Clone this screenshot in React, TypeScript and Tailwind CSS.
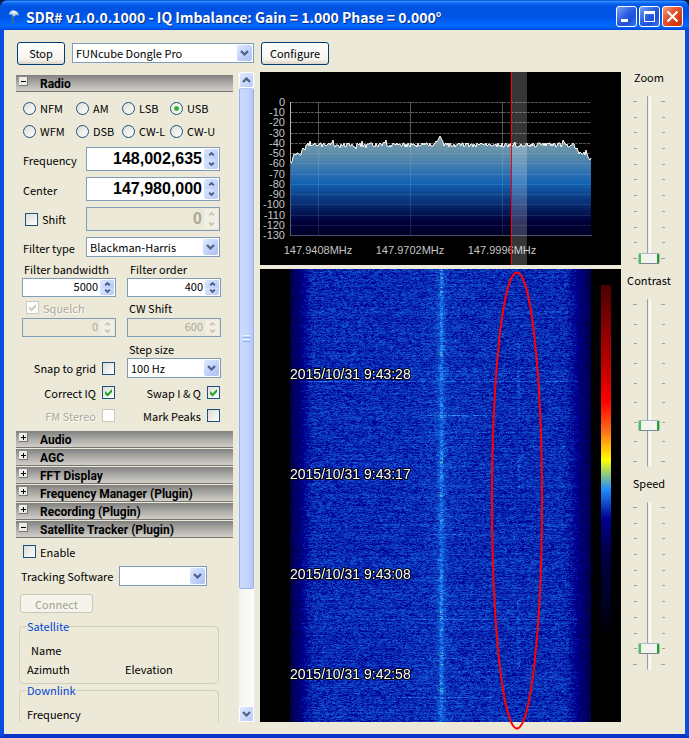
import { useLayoutEffect, useRef, type ReactNode } from 'react';

function createRandom(seed: number) {
  let state = seed;
  return () => {
    state = (state + 0x6d2b79f5) | 0;
    let t = Math.imul(state ^ (state >>> 15), 1 | state);
    t = (t + Math.imul(t ^ (t >>> 7), 61 | t)) ^ t;
    return ((t ^ (t >>> 14)) >>> 0) / 4294967296;
  };
}

/* ---------- Window chrome ---------- */

function TitleBar() {
  const button =
    'flex h-[21px] w-[21px] items-center justify-center rounded-[3px] border border-white';
  const blue = 'bg-[linear-gradient(135deg,#7ea2f5,#2a5fe0_45%,#1d4fd8_70%,#3c7bf5)]';
  return (
    <header className="flex h-[30px] shrink-0 items-center bg-[linear-gradient(180deg,#0048d0,#2b8bff_5%,#0a62f0_12%,#0053e1_25%,#0054e5_55%,#0066ff_80%,#0066ff_90%,#0045d5)] pt-[3px] pr-[6px] pl-[7px]">
      <svg viewBox="0 0 14 16" className="h-4 w-[14px]" aria-hidden="true">
        <path d="M4.500 7h2.400v7.500H4.500z" fill="#3f6a9c" />
        <path d="M2 5.500C2 2.500 4.500 .8 7 1.200c3 .5 4.800 2.400 4.800 5.300L9 5.800 7 7.800 4.500 5.500Z" fill="#b4cbe0" />
        <path d="M3.500 3C5.500 1.300 8.500 1.700 10 3.700L6.500 4.500Z" fill="#eef5fb" />
      </svg>
      <h1 className="ml-[5px] flex-1 truncate font-['Noto_Sans_CJK_JP','Noto_Sans',sans-serif] text-sm leading-5 font-bold text-white [text-shadow:1px_1px_0_#0a2a80]">
        SDR# v1.0.0.1000 - IQ Imbalance: Gain = 1.000 Phase = 0.000°
      </h1>
      <div className="flex gap-[2px]">
        <button aria-label="Minimize" className={`${button} ${blue}`}>
          <svg viewBox="0 0 19 19" className="h-[19px] w-[19px]"><path d="M4 12h7v3H4z" fill="#fff" /></svg>
        </button>
        <button aria-label="Maximize" className={`${button} ${blue}`}>
          <svg viewBox="0 0 19 19" className="h-[19px] w-[19px]">
            <path d="M4 4h11v11H4zM5 7v7h9V7z" fill="#fff" fillRule="evenodd" />
          </svg>
        </button>
        <button aria-label="Close" className={`${button} bg-[linear-gradient(135deg,#f0a088,#e25330_40%,#d63a12_75%,#c8380f)]`}>
          <svg viewBox="0 0 19 19" className="h-[19px] w-[19px]">
            <path d="M4.500 4.500l10 10M14.500 4.500l-10 10" stroke="#fff" strokeWidth="2.200" />
          </svg>
        </button>
      </div>
    </header>
  );
}

/* ---------- Form controls ---------- */

function Chevron({ up = false, small = false, color = '#4d6185' }: { up?: boolean; small?: boolean; color?: string }) {
  return (
    <svg viewBox="0 0 9 6" className={small ? 'h-1 w-[7px]' : 'h-[6px] w-[9px]'} aria-hidden="true">
      <path d={up ? 'M1 5L4.500 1.500 8 5' : 'M1 1L4.500 4.500 8 1'} fill="none" stroke={color} strokeWidth={small ? 2.800 : 2.200} />
    </svg>
  );
}

function PushButton({ children, className, disabled }: { children: ReactNode; className: string; disabled?: boolean }) {
  return (
    <button
      disabled={disabled}
      className={`rounded-[3px] border border-[#003c74] bg-[linear-gradient(180deg,#fff,#f4f3ee_80%,#d8d2c4)] disabled:border-[#c9c7ba] disabled:bg-none disabled:bg-[#f5f4ea] disabled:text-[#a1a192] ${className}`}
    >
      {children}
    </button>
  );
}

function Select({ id, label, options, className }: { id: string; label?: string; options: string[]; className: string }) {
  return (
    <div className={`relative h-[20px] ${className}`}>
      <select
        id={id}
        aria-label={label}
        className="block h-full w-full appearance-none border border-[#7f9db9] bg-white pr-5 pl-[3px] leading-[18px]"
      >
        {options.map((o) => (
          <option key={o}>{o}</option>
        ))}
      </select>
      <span className="pointer-events-none absolute inset-y-[2px] right-[2px] flex w-[15px] items-center justify-center rounded-[2px] bg-[linear-gradient(135deg,#e1eafe,#c3d3fd_50%,#aebff0)]">
        <Chevron />
      </span>
    </div>
  );
}

function Spinner({ id, label, value, large, disabled }: { id: string; label?: string; value: string; large?: boolean; disabled?: boolean }) {
  const step = disabled
    ? 'flex flex-1 items-center justify-center bg-[#f1efe4]'
    : 'flex flex-1 items-center justify-center bg-[linear-gradient(135deg,#dbe6fe,#b8c9f8)]';
  const arrow = disabled ? '#c9c7ba' : '#4d6185';
  return (
    <div className={`flex w-full border border-[#7f9db9] ${large ? 'h-[24px]' : 'h-[19px]'} ${disabled ? 'bg-[#ebe8d7]' : 'bg-white'}`}>
      <input
        id={id}
        aria-label={label}
        defaultValue={value}
        disabled={disabled}
        className={`h-full min-w-0 flex-1 bg-transparent pr-[2px] text-right disabled:text-[#aca899] ${
          large ? "pb-[1px] font-['Liberation_Sans',Arial,sans-serif] text-base font-bold" : 'pb-[3px] text-[11px]'
        }`}
      />
      <div className="my-[1px] mr-[1px] flex w-[14px] flex-col overflow-hidden rounded-[2px]">
        <button aria-label={`Increase ${id}`} disabled={disabled} className={step}><Chevron up small color={arrow} /></button>
        <button aria-label={`Decrease ${id}`} disabled={disabled} className={step}><Chevron small color={arrow} /></button>
      </div>
    </div>
  );
}

function Radio({ label, checked }: { label: string; checked?: boolean }) {
  return (
    <label className="flex items-center gap-1">
      <input
        type="radio"
        name="mode"
        defaultChecked={checked}
        className="h-[13px] w-[13px] shrink-0 appearance-none rounded-full border border-[#215280] bg-[linear-gradient(135deg,#dcdcd7,#fff)] checked:bg-[radial-gradient(circle,#21a121_0,#3cc43c_2px,#f4f4f0_3px)]"
      />
      <span className="whitespace-nowrap">{label}</span>
    </label>
  );
}

function Check({ label, checked, disabled, trailing, className = '' }: { label: string; checked?: boolean; disabled?: boolean; trailing?: boolean; className?: string }) {
  return (
    <label
      className={`flex h-[13px] items-center ${trailing ? 'flex-row-reverse gap-[6px]' : 'gap-1'} ${
        disabled ? 'text-[#aca899] [text-shadow:1px_1px_0_#fff]' : ''
      } ${className}`}
    >
      <span className="relative h-[13px] w-[13px] shrink-0">
        <input
          type="checkbox"
          defaultChecked={checked}
          disabled={disabled}
          className="peer block h-[13px] w-[13px] appearance-none border border-[#1c5180] bg-[linear-gradient(135deg,#dcdcd7,#fff)] disabled:border-[#cac8bb] disabled:bg-none disabled:bg-white"
        />
        <svg viewBox="0 0 13 13" className="pointer-events-none absolute inset-0 hidden text-[#21a121] peer-checked:block peer-disabled:text-[#cac8bb]">
          <path d="M3 5v3l2.500 2.500L10 6V3L5.500 7.500Z" fill="currentColor" />
        </svg>
      </span>
      <span className="whitespace-nowrap">{label}</span>
    </label>
  );
}

function SectionHeader({ title, open }: { title: string; open?: boolean }) {
  return (
    <h2 className="mb-[1px] h-[17px] border-b border-[#77756f] bg-[linear-gradient(180deg,#808080,#a3a29f_40%,#d2cfc8)]">
      <button aria-expanded={!!open} className="flex h-4 w-full items-center text-left font-[Roboto,Arial,sans-serif] text-xs leading-4 font-bold">
        <svg viewBox="0 0 9 9" className="mb-[3px] ml-[3px] h-[9px] w-[9px]" aria-hidden="true">
          <path d="M0 0h9v9H0z" fill="#777" />
          <path d="M0 0h8v8H0z" fill="#eceae4" />
          <path d={open ? 'M2 4h5v1H2z' : 'M2 4h5v1H2zM4 2h1v5H4z'} fill="#000" />
        </svg>
        <span className="mt-[2px] ml-3">{title}</span>
      </button>
    </h2>
  );
}

/* ---------- Side panel ---------- */

function RadioSection() {
  return (
    <div className="pt-[7px] pr-[12px] pl-[6px]">
      <div className="grid grid-cols-[53px_46px_48px_1fr] gap-y-[7px] pl-[1px] leading-4">
        <Radio label="NFM" />
        <Radio label="AM" />
        <Radio label="LSB" />
        <Radio label="USB" checked />
        <Radio label="WFM" />
        <Radio label="DSB" />
        <Radio label="CW-L" />
        <Radio label="CW-U" />
      </div>

      <div className="mt-2 grid grid-cols-[61px_134px] items-center gap-x-[2px] gap-y-[6px] pl-[1px]">
        <label htmlFor="frequency" className="pt-[2px]">Frequency</label>
        <Spinner id="frequency" value="148,002,635" large />
        <label htmlFor="center" className="pt-[2px]">Center</label>
        <Spinner id="center" value="147,980,000" large />
        <Check label="Shift" className="pl-[2px]" />
        <Spinner id="shift" label="Shift" value="0" large disabled />
        <label htmlFor="filter-type" className="pt-[2px]">Filter type</label>
        <Select id="filter-type" options={['Blackman-Harris']} className="w-full" />
      </div>

      <div className="mt-[4px] grid grid-cols-[94px_94px] gap-x-[11px] whitespace-nowrap">
        <label htmlFor="bandwidth" className="h-[17px] pl-[2px] leading-4">Filter bandwidth</label>
        <label htmlFor="order" className="h-[17px] pl-[3px] leading-4">Filter order</label>
        <Spinner id="bandwidth" value="5000" />
        <Spinner id="order" value="400" />
        <div className="flex h-[21px] items-center pl-1"><Check label="Squelch" checked disabled /></div>
        <label htmlFor="cw-shift" className="h-[21px] pt-[3px] pl-[2px] leading-4">CW Shift</label>
        <Spinner id="squelch" label="Squelch" value="0" disabled />
        <Spinner id="cw-shift" value="600" disabled />
      </div>

      <div className="mt-[4px] grid grid-cols-[94px_94px] items-center gap-x-[11px]">
        <span />
        <label htmlFor="step" className="h-[17px] pl-[2px] leading-4">Step size</label>
        <Check label="Snap to grid" trailing className="pr-[1px]" />
        <Select id="step" options={['100 Hz']} className="w-full" />
      </div>
      <div className="mt-[8px] grid grid-cols-[93px_105px] gap-y-[10px]">
        <Check label="Correct IQ" checked trailing />
        <Check label="Swap I & Q" checked trailing />
        <Check label="FM Stereo" disabled trailing />
        <Check label="Mark Peaks" trailing />
      </div>
    </div>
  );
}

function TrackerSection() {
  const group = 'rounded-[4px] border border-[#d0d0bf] px-[7px]';
  const legend = 'text-[#0046d5] leading-3';
  return (
    <div className="pt-[6px] pl-[3px]">
      <Check label="Enable" className="ml-1" />
      <div className="mt-[8px] flex items-center gap-[5px] pl-[2px]">
        <label htmlFor="tracking" className="w-[93px] whitespace-nowrap">Tracking Software</label>
        <Select id="tracking" options={['']} className="w-[88px]" />
      </div>
      <PushButton disabled className="mt-2 ml-[1px] block h-[19px] w-[73px] leading-4">Connect</PushButton>
      <fieldset className={`${group} mt-[7px] h-[64px] w-[200px]`}>
        <legend className={legend}>Satellite</legend>
        <p className="mt-[10px] pl-1 leading-4">Name</p>
        <div className="mt-[3px] grid grid-cols-2 gap-x-[12px] leading-4">
          <span>Azimuth</span>
          <span>Elevation</span>
        </div>
      </fieldset>
      <fieldset className={`${group} h-[80px] w-[200px]`}>
        <legend className={legend}>Downlink</legend>
        <p className="mt-[10px] leading-4">Frequency</p>
      </fieldset>
    </div>
  );
}

function ScrollBar() {
  const cap = 'flex h-[16px] w-full shrink-0 items-center justify-center rounded-[2px] border border-white bg-[linear-gradient(135deg,#dfe8ff,#b9cbf8)]';
  return (
    <div className="ml-[5px] flex w-[17px] shrink-0 flex-col border-x border-[#eeede5] bg-[linear-gradient(90deg,#f3f1ec,#fefefb)]">
      <button aria-label="Scroll up" className={cap}><Chevron up /></button>
      <div className="flex min-h-0 flex-1 flex-col">
        <div className="flex h-[81%] flex-col items-center justify-center rounded-[2px] border border-[#98b0ea] border-t-[#b7cafa] bg-[linear-gradient(90deg,#cbdafe,#c4d4fd_60%,#b4c7f5)]">
          <div className="flex flex-col gap-[1px]">
            <i className="h-[1px] w-[7px] bg-[#eef4fe]" />
            <i className="h-[1px] w-[7px] bg-[#8cb0f8]" />
            <i className="h-[1px] w-[7px] bg-[#eef4fe]" />
            <i className="h-[1px] w-[7px] bg-[#8cb0f8]" />
          </div>
        </div>
      </div>
      <button aria-label="Scroll down" className={cap}><Chevron /></button>
    </div>
  );
}

/* ---------- Spectrum ---------- */

function spectrumPoints() {
  const random = createRandom(11);
  const points: string[] = [];
  for (let x = 30; x <= 331; x += 1) {
    let y = 73 + (random() - 0.5) * 5;
    if (random() > 0.93) y -= 3;
    if (random() > 0.97) y += 3;
    if (x < 34) y = 91 - (x - 30) * 2 + random() * 3;
    else if (x < 42) y = 81 + random() * 2;
    else if (x < 46) y = 76 + random() * 3;
    if (x > 312) y += (x - 312) * 0.7;
    const peak = Math.abs(x - 180);
    if (peak < 4) y = 64 + peak * 2;
    points.push(`${x},${Math.round(y)}`);
  }
  return points.join(' ');
}

const SPECTRUM = spectrumPoints();

function Grid({ stroke }: { stroke: string }) {
  return (
    <g stroke={stroke}>
      {Array.from({ length: 13 }, (_, i) => {
        const y = Math.round(30 + i * 10.23) + 0.5;
        return <line key={i} x1="31" x2="331" y1={y} y2={y} strokeDasharray="3 1" />;
      })}
      <path d="M58.500 30V163M150.500 30V163M242.500 30V163" />
    </g>
  );
}

function Spectrum() {
  return (
    <svg viewBox="0 0 361 193" className="block w-full bg-black" role="img" aria-label="Spectrum">
      <defs>
        <linearGradient id="fill" gradientUnits="userSpaceOnUse" x1="0" x2="0" y1="66" y2="163">
          <stop offset="0" stopColor="#7f9fa8" />
          <stop offset="0.180" stopColor="#5a8bab" />
          <stop offset="0.460" stopColor="#1462b4" />
          <stop offset="0.600" stopColor="#0b4088" />
          <stop offset="0.860" stopColor="#00003a" />
          <stop offset="1" stopColor="#000028" />
        </linearGradient>
      </defs>
      <Grid stroke="rgba(255,255,255,0.25)" />
      <polygon points={`30,163 ${SPECTRUM} 331,163`} fill="url(#fill)" />
      <Grid stroke="rgba(255,255,255,0.12)" />
      <polyline points={SPECTRUM} fill="none" stroke="#fff" strokeWidth="1" />
      <path d="M30.500 30V91" stroke="#b8b8b8" />
      <path d="M30.500 91V163" stroke="#4a5a80" />
      <path d="M30 163.500H332" stroke="#4b4b70" />
      <g fill="#c4c4c4" fontFamily="'Liberation Sans', Arial, sans-serif" fontSize="11">
        {Array.from({ length: 14 }, (_, i) => (
          <text key={i} x="25" y={Math.round(34 + i * 10.23)} textAnchor="end">
            {i === 0 ? '0' : `-${i * 10}`}
          </text>
        ))}
        <text x="58" y="182" textAnchor="middle">147.9408MHz</text>
        <text x="150" y="182" textAnchor="middle">147.9702MHz</text>
        <text x="242" y="182" textAnchor="middle">147.9996MHz</text>
      </g>
      <rect x="252" y="0" width="15" height="193" fill="#fff" opacity="0.210" />
      <rect x="251" y="0" width="1" height="193" fill="#f00" />
    </svg>
  );
}

/* ---------- Waterfall ---------- */

const RAMP: number[][] = [
  [0, 0, 0],
  [0, 0, 32],
  [0, 0, 48],
  [0, 0, 80],
  [0, 0, 145],
  [30, 144, 255],
  [255, 255, 0],
];

const STREAKS: number[][] = [
  [61, 130, 325, 0.15], [102, 140, 310, 0.2], [112, 36, 320, 0.55], [146, 160, 225, 0.6],
  [163, 150, 270, 0.35], [177, 110, 325, 0.3], [197, 80, 320, 0.15], [217, 150, 325, 0.3],
  [226, 60, 320, 0.2], [256, 60, 320, 0.25], [265, 160, 215, 0.4], [291, 60, 320, 0.2],
  [311, 150, 310, 0.25], [337, 40, 320, 0.25], [350, 100, 325, 0.35], [350, 190, 230, 0.3],
  [389, 150, 225, 0.5], [402, 60, 250, 0.15], [428, 130, 235, 0.6], [443, 50, 300, 0.2],
];

function edgeLoss(x: number) {
  const left = Math.max(0, (56 - x) / 26);
  const right = Math.max(0, (x - 301) / 30);
  const depth = Math.max(left, right);
  return depth * depth * 1.5;
}

function drawWaterfall(canvas: HTMLCanvasElement) {
  const ctx = canvas.getContext('2d');
  if (!ctx) return;
  const { width, height } = canvas;
  const image = ctx.createImageData(width, height);
  const random = createRandom(2015);
  for (let y = 0; y < height; y += 1) {
    const rowBias = (random() - 0.5) * 0.14;
    const hot = random();
    let previous = random();
    for (let x = 0; x < width; x += 1) {
      const i = (y * width + x) * 4;
      image.data[i + 3] = 255;
      if (x < 30 || x >= 331) continue;
      const sample = random() > 0.3 ? random() : previous;
      const noise = sample * 0.85 + previous * 0.15;
      previous = sample;
      let level = 3.99 + rowBias + noise * 0.6;
      if (random() > 0.98) level += 0.15;
      const centre = Math.abs(x - 181);
      level += 0.26 * Math.exp(-(centre * centre) / 16) + 0.08 * Math.exp(-centre / 16);
      if (centre <= 1) level += 0.08 + (hot > 0.65 ? random() * 0.5 : 0);
      if (Math.abs(x - 258) <= 1 && ((y > 70 && y < 150) || (y > 190 && y < 230) || (y > 330 && y < 400))) level += random() * 0.25;
      for (const [sy, from, to, gain] of STREAKS) {
        if (sy === y && x > from && x < to) level += gain * random();
      }
      level -= edgeLoss(x) * (0.8 + random() * 0.5);
      level = Math.max(0, Math.min(5.990, level));
      const base = Math.floor(level);
      const part = level - base;
      for (let c = 0; c < 3; c += 1) {
        image.data[i + c] = RAMP[base][c] + (RAMP[base + 1][c] - RAMP[base][c]) * part;
      }
    }
  }
  ctx.putImageData(image, 0, 0);
}

function Waterfall() {
  const ref = useRef<HTMLCanvasElement>(null);
  useLayoutEffect(() => {
    if (ref.current) drawWaterfall(ref.current);
  }, []);
  const bar = ['#4a0000', '#750000', '#9f0000', '#c60000', '#ff0000', '#fe6d16', '#ffff00', '#1e90ff', '#000091', '#000050', '#000030', '#000020', '#000000'];
  const stamps = ['2015/10/31 9:43:28', '2015/10/31 9:43:17', '2015/10/31 9:43:08', '2015/10/31 9:42:58'];
  return (
    <div className="relative min-h-0 flex-1 bg-black">
      <canvas ref={ref} width={361} height={453} className="block h-full w-full" />
      <svg viewBox="0 0 361 453" className="absolute inset-0 h-full w-full overflow-visible" role="img" aria-label="Waterfall">
        <defs>
          <linearGradient id="levels" x1="0" x2="0" y1="0" y2="1">
            {bar.map((color, i) => (
              <stop key={color} offset={i / (bar.length - 1)} stopColor={color} />
            ))}
          </linearGradient>
        </defs>
        <rect x="341" y="16" width="10" height="350" fill="url(#levels)" />
        <g fill="#fff" stroke="#000" strokeWidth="2" strokeLinejoin="round" paintOrder="stroke" fontFamily="'Liberation Sans', Arial, sans-serif" fontSize="14">
          {stamps.map((stamp, i) => (
            <text key={stamp} x="30" y={110 + i * 100}>{stamp}</text>
          ))}
        </g>
        <ellipse cx="257" cy="231.500" rx="25" ry="228" fill="none" stroke="#f00" strokeWidth="2" />
      </svg>
    </div>
  );
}

/* ---------- Sliders ---------- */

function Ticks({ count }: { count: number }) {
  return (
    <div className="my-[5px] flex w-1 flex-col items-center justify-between">
      {Array.from({ length: count }, (_, i) => (
        <i key={i} className="h-[1px] w-[3px] bg-[#a5a393] first:w-1 last:w-1" />
      ))}
    </div>
  );
}

function VerticalSlider({ id, label, ticks, value, max }: { id: string; label: string; ticks: number; value: number; max: number }) {
  return (
    <div className="flex flex-col items-center">
      <label htmlFor={id} className="leading-[11px]">{label}</label>
      <div className="mt-[13px] flex h-[168px] gap-[1px]">
        <Ticks count={ticks} />
        <input
          id={id}
          type="range"
          min={0}
          max={max}
          defaultValue={value}
          className="h-[168px] w-[22px] appearance-none bg-transparent [direction:rtl] [writing-mode:vertical-lr] [&::-webkit-slider-runnable-track]:h-full [&::-webkit-slider-runnable-track]:w-1 [&::-webkit-slider-runnable-track]:rounded-[1px] [&::-webkit-slider-runnable-track]:bg-[linear-gradient(90deg,#9d9c99_25%,#f0f0ec_25%,#f0f0ec_75%,#fff_75%)] [&::-webkit-slider-thumb]:-ml-[9px] [&::-webkit-slider-thumb]:h-[11px] [&::-webkit-slider-thumb]:w-[22px] [&::-webkit-slider-thumb]:appearance-none [&::-webkit-slider-thumb]:rounded-[2px] [&::-webkit-slider-thumb]:border [&::-webkit-slider-thumb]:border-[#a9bac4] [&::-webkit-slider-thumb]:border-b-[#778892] [&::-webkit-slider-thumb]:bg-[linear-gradient(90deg,#45c845_2px,#f3f3ef_2px,#f3f3ef_18px,#21a121_18px)]"
        />
        <Ticks count={ticks} />
      </div>
    </div>
  );
}

/* ---------- Application ---------- */

export default function App() {
  return (
    <div className="h-screen overflow-hidden bg-[#0a1a4a]">
      <div className="flex h-full flex-col overflow-hidden rounded-t-[8px] font-['Noto_Sans_CJK_JP','Noto_Sans',sans-serif] text-[11px] leading-4 text-black">
        <TitleBar />
        <div className="flex min-h-0 flex-1 flex-col border-x-4 border-b-4 border-x-[#0a4be0] border-b-[#0836c8] bg-[#ece9d8] px-3 pt-3 pb-3">
          <div className="flex items-start gap-[7px] pl-[1px]">
            <PushButton className="h-[23px] w-[48px] pb-[2px]">Stop</PushButton>
            <Select id="source" label="Source" options={['FUNcube Dongle Pro']} className="mt-[1px] w-[182px]" />
            <PushButton className="h-[23px] w-[68px] pb-[2px]">Configure</PushButton>
          </div>
          <main className="mt-[7px] flex min-h-0 flex-1">
            <div className="w-[217px] shrink-0 overflow-hidden pt-[3px]">
              <SectionHeader title="Radio" open />
              <RadioSection />
              <div className="mt-[9px]">
                <SectionHeader title="Audio" />
                <SectionHeader title="AGC" />
                <SectionHeader title="FFT Display" />
                <SectionHeader title="Frequency Manager (Plugin)" />
                <SectionHeader title="Recording (Plugin)" />
                <SectionHeader title="Satellite Tracker (Plugin)" open />
              </div>
              <TrackerSection />
            </div>
            <ScrollBar />
            <section className="ml-[5px] flex min-w-0 flex-1 flex-col gap-1">
              <Spectrum />
              <Waterfall />
            </section>
            <aside className="-mr-1 flex w-14 shrink-0 flex-col gap-[11px]">
              <VerticalSlider id="zoom" label="Zoom" ticks={11} value={0} max={10} />
              <VerticalSlider id="contrast" label="Contrast" ticks={9} value={23} max={100} />
              <VerticalSlider id="speed" label="Speed" ticks={11} value={1} max={10} />
            </aside>
          </main>
        </div>
      </div>
    </div>
  );
}
